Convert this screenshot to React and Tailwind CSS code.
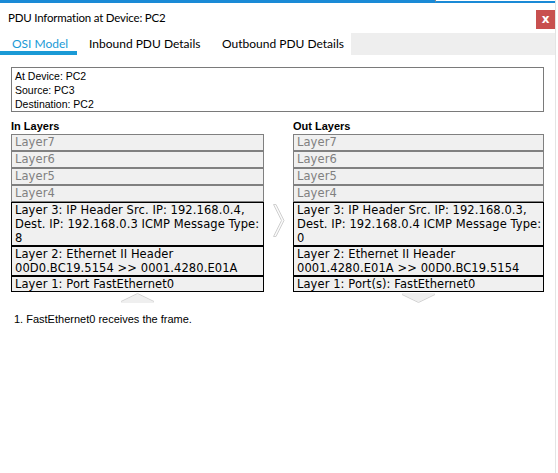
import React from 'react'

const inLayers = [
  { text: 'Layer7', on: false },
  { text: 'Layer6', on: false },
  { text: 'Layer5', on: false },
  { text: 'Layer4', on: false },
  { text: 'Layer 3: IP Header Src. IP: 192.168.0.4, Dest. IP: 192.168.0.3 ICMP Message Type: 8', on: true },
  { text: 'Layer 2: Ethernet II Header 00D0.BC19.5154 >> 0001.4280.E01A', on: true },
  { text: 'Layer 1: Port FastEthernet0', on: true },
]

const outLayers = [
  { text: 'Layer7', on: false },
  { text: 'Layer6', on: false },
  { text: 'Layer5', on: false },
  { text: 'Layer4', on: false },
  { text: 'Layer 3: IP Header Src. IP: 192.168.0.3, Dest. IP: 192.168.0.4 ICMP Message Type: 0', on: true },
  { text: 'Layer 2: Ethernet II Header 0001.4280.E01A >> 00D0.BC19.5154', on: true },
  { text: 'Layer 1: Port(s): FastEthernet0', on: true },
]

const LayerBox = ({ layer }) => (
  <div
    className={
      layer.on
        ? 'border border-black bg-[#f0f0f0] text-black pl-[3px] text-[11.5px] tracking-[0.08px] leading-[14px]'
        : 'border border-[#808080] bg-[#f0f0f0] text-[#808080] pl-[3px] text-[11.5px] tracking-[0.08px] leading-[15px]'
    }
    style={{ fontFamily: '"DejaVu Sans", Verdana, sans-serif' }}
  >
    {layer.text}
  </div>
)

const UpArrow = () => (
  <svg width="33" height="10" viewBox="0 0 33 10">
    <polygon points="0,9 16.5,1 33,9 33,10 0,10" fill="#efefef" />
    <polyline points="0,8.5 16.5,0.5 33,8.5" fill="none" stroke="#d2d2d2" strokeWidth="1" />
  </svg>
)

const DownArrow = () => (
  <svg width="33" height="10" viewBox="0 0 33 10">
    <polygon points="0,0 33,0 33,1 16.5,9 0,1" fill="#efefef" />
    <polyline points="0,1.5 16.5,9.5 33,1.5" fill="none" stroke="#d2d2d2" strokeWidth="1" />
  </svg>
)

const Column = ({ title, layers, width, arrow }) => (
  <div className={'flex flex-col ' + width}>
    <div className="text-[11px] font-bold leading-[13px] mb-[1px]" style={{ fontFamily: '"Liberation Sans", Arial, sans-serif' }}>
      {title}
    </div>
    {layers.map((l, i) => (
      <LayerBox key={i} layer={l} />
    ))}
    <div className="flex justify-center mt-[1px]">{arrow}</div>
  </div>
)

const App = () => {
  return (
    <div className="w-[558px] h-[473px] bg-white flex overflow-hidden text-black">
      <div className="w-[555px] flex flex-col">
        {/* strip from the window behind */}
        <div className="h-[3px] flex">
          <div className="w-[435px] bg-[#1a8ad6]" />
          <div className="flex-1 bg-white border-l border-[#8a8a8a] border-b-2 border-b-[#1a8ad6]" />
        </div>

        <div className="h-[30px] flex items-start justify-between">
          <div className="pl-[8px] pt-[7px] text-[11.5px] tracking-[-0.2px] leading-[16px]" style={{ fontFamily: 'Lato, "Noto Sans", sans-serif' }}>
            PDU Information at Device: PC2
          </div>
          <div className="mt-[7px] w-[19px] h-[19px] bg-[#c8504f] text-white flex items-center justify-center text-[12px] font-bold leading-none pb-[2px]" style={{ fontFamily: '"DejaVu Sans", sans-serif' }}>
            x
          </div>
        </div>

        <div className="h-[22px] flex text-[12px]" style={{ fontFamily: 'Lato, "Noto Sans", sans-serif' }}>
          <div className="w-[77px] pl-[12px] text-[#1a9ad6] border-b-4 border-[#1a9ad6] leading-[20px] pt-[1px]">OSI Model</div>
          <div className="w-[135px] pl-[12px] leading-[20px] pt-[1px]">Inbound PDU Details</div>
          <div className="w-[139px] pl-[10px] leading-[20px] pt-[1px]">Outbound PDU Details</div>
          <div className="flex-1 bg-[#eeeeee]" />
        </div>

        <div className="px-[11px] pt-[12px] flex flex-col">
          <div className="border border-[#7a7a7a] pl-[3px] pt-[1px] h-[45px] text-[10.5px] leading-[14px]" style={{ fontFamily: '"Liberation Sans", Arial, sans-serif' }}>
            <div>At Device: PC2</div>
            <div>Source: PC3</div>
            <div>Destination: PC2</div>
          </div>

          <div className="flex mt-[8px]">
            <Column title="In Layers" layers={inLayers} width="w-[253px]" arrow={<UpArrow />} />
            <div className="w-[29px] flex justify-center pt-[84px]">
              <svg width="12" height="33" viewBox="0 0 12 33">
                <polygon points="0.5,0.5 3,0.5 11,16.5 3,32.5 0.5,32.5 8.5,16.5" fill="#fafafa" stroke="#d0d0d0" strokeWidth="1" />
              </svg>
            </div>
            <Column title="Out Layers" layers={outLayers} width="w-[251px]" arrow={<DownArrow />} />
          </div>

          <div className="mt-[9px] pl-[3px] text-[11px] leading-[14px]" style={{ fontFamily: '"Liberation Sans", Arial, sans-serif' }}>
            1. FastEthernet0 receives the frame.
          </div>
        </div>
      </div>
      <div className="flex-1 bg-white border-l border-[#e4e4e4]" />
    </div>
  )
}

export default App
